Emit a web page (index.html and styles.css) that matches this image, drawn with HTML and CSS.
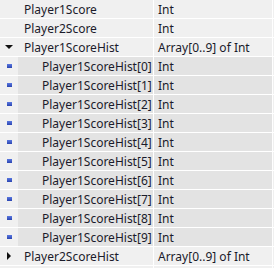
FILE: index.html
```html
<!DOCTYPE html>
<html>
<head>
<meta charset="utf-8">
<link rel="stylesheet" href="styles.css">
</head>
<body>
<div class="grid">
  <div class="row"><div class="name"><span class="ind"></span><span class="label">Player1Score</span></div><div class="type">Int</div><div class="end"></div></div>
  <div class="row"><div class="name"><span class="ind"></span><span class="label">Player2Score</span></div><div class="type">Int</div><div class="end"></div></div>
  <div class="row"><div class="name"><span class="ind"><span class="tri-down"></span></span><span class="label">Player1ScoreHist</span></div><div class="type">Array[0..9] of Int</div><div class="end"></div></div>
  <div class="row child"><div class="name"><span class="ind"><span class="sq"></span></span><span class="label sub">Player1ScoreHist[0]</span></div><div class="type">Int</div><div class="end"></div></div>
  <div class="row child"><div class="name"><span class="ind"><span class="sq"></span></span><span class="label sub">Player1ScoreHist[1]</span></div><div class="type">Int</div><div class="end"></div></div>
  <div class="row child"><div class="name"><span class="ind"><span class="sq"></span></span><span class="label sub">Player1ScoreHist[2]</span></div><div class="type">Int</div><div class="end"></div></div>
  <div class="row child"><div class="name"><span class="ind"><span class="sq"></span></span><span class="label sub">Player1ScoreHist[3]</span></div><div class="type">Int</div><div class="end"></div></div>
  <div class="row child"><div class="name"><span class="ind"><span class="sq"></span></span><span class="label sub">Player1ScoreHist[4]</span></div><div class="type">Int</div><div class="end"></div></div>
  <div class="row child"><div class="name"><span class="ind"><span class="sq"></span></span><span class="label sub">Player1ScoreHist[5]</span></div><div class="type">Int</div><div class="end"></div></div>
  <div class="row child"><div class="name"><span class="ind"><span class="sq"></span></span><span class="label sub">Player1ScoreHist[6]</span></div><div class="type">Int</div><div class="end"></div></div>
  <div class="row child"><div class="name"><span class="ind"><span class="sq"></span></span><span class="label sub">Player1ScoreHist[7]</span></div><div class="type">Int</div><div class="end"></div></div>
  <div class="row child"><div class="name"><span class="ind"><span class="sq"></span></span><span class="label sub">Player1ScoreHist[8]</span></div><div class="type">Int</div><div class="end"></div></div>
  <div class="row child"><div class="name"><span class="ind"><span class="sq"></span></span><span class="label sub">Player1ScoreHist[9]</span></div><div class="type">Int</div><div class="end"></div></div>
  <div class="row"><div class="name"><span class="ind"><span class="tri-right"></span></span><span class="label">Player2ScoreHist</span></div><div class="type">Array[0..9] of Int</div><div class="end"></div></div>
  <div class="row"><div class="name"><span class="ind"></span></div><div class="type"></div><div class="end"></div></div>
</div>
</body>
</html>
```
FILE: styles.css
```css
html, body {
  margin: 0;
  padding: 0;
  background: #ffffff;
}
.grid {
  display: flex;
  flex-direction: column;
  gap: 1px;
  height: 268px;
  overflow: hidden;
  font-family: "Noto Sans", "DejaVu Sans", sans-serif;
  font-size: 12px;
  color: #1b1b2b;
}
.row {
  display: grid;
  grid-template-columns: 153px 118px 1px;
  column-gap: 1px;
  height: 18px;
  flex: none;
}
.name, .type, .end {
  background: #f0f0f0;
  display: flex;
  align-items: center;
  white-space: nowrap;
  overflow: hidden;
}
.type {
  padding-left: 4px;
}
.ind {
  width: 18px;
  height: 100%;
  flex: none;
  display: flex;
  align-items: center;
  justify-content: center;
  background: #f0f0f0;
}
.label {
  padding-left: 6px;
  flex: 1;
  height: 100%;
  display: flex;
  align-items: center;
}
.label.sub {
  padding-left: 24px;
}
.child .label, .child .type {
  background: #e3e3e3;
}
.tri-down {
  width: 0;
  height: 0;
  border-left: 4px solid transparent;
  border-right: 4px solid transparent;
  border-top: 4px solid #111;
}
.tri-right {
  width: 0;
  height: 0;
  border-top: 4px solid transparent;
  border-bottom: 4px solid transparent;
  border-left: 4px solid #111;
}
.sq {
  width: 5px;
  height: 4px;
  background: linear-gradient(#5a78e0, #2a44b0);
}
```
